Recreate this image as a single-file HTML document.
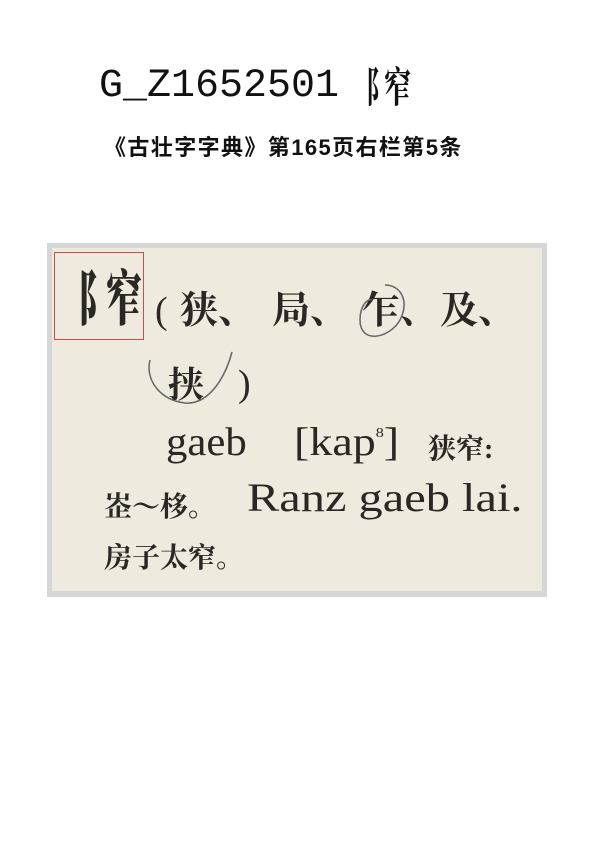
<!DOCTYPE html>
<html><head><meta charset="utf-8"><style>
body{margin:0;width:595px;height:842px;background:#fff;position:relative;overflow:hidden}
.a{position:absolute;white-space:nowrap;line-height:1}
.cj{font-family:"Liberation Serif","Noto Serif CJK SC",serif;color:#2a2724;font-weight:bold}
.sr{font-family:"Liberation Serif",serif;color:#2a2724;transform-origin:left top}
</style></head><body>
<div class="a" style="left:99px;top:64px;font:40px 'Liberation Mono',monospace;color:#111">G_Z1652501</div>
<div class="a" style="left:366px;top:64px;font-size:42px;font-family:'Noto Serif CJK SC',serif;font-weight:bold;color:#111"><span style="display:inline-block;transform:scaleX(.55);transform-origin:left;width:18px">阝</span><span style="display:inline-block;transform:scaleX(.65);transform-origin:left;width:26px">窄</span></div>
<div class="a" style="left:104px;top:130px;font:bold 22px 'Liberation Sans','Noto Sans CJK SC',sans-serif;color:#111;letter-spacing:1.4px">《古壮字字典》第165页右栏第5条</div>

<div class="a" style="left:47px;top:243px;width:500px;height:354px;background:#d6d6d6"></div>
<div class="a" style="left:52px;top:248px;width:490px;height:343px;background:#eeeade"></div>
<div class="a" style="left:54px;top:252px;width:88px;height:86px;border:1px solid #c9504a"></div>
<div class="a cj" style="left:78px;top:270px;font-size:60px;font-weight:900"><span style="display:inline-block;transform:scaleX(.55);transform-origin:left;width:28px">阝</span><span style="display:inline-block;transform:scaleX(.6);transform-origin:left;width:33px">窄</span></div>
<div class="a cj" style="left:155px;top:292px;font-size:38px;font-weight:normal">(</div>
<div class="a cj" style="left:180px;top:292px;font-size:38px">狭、</div>
<div class="a cj" style="left:272px;top:292px;font-size:38px">局、</div>
<div class="a cj" style="left:362px;top:292px;font-size:38px">乍、</div>
<div class="a cj" style="left:440px;top:292px;font-size:38px">及、</div>
<div class="a cj" style="left:168px;top:367px;font-size:36px">挟</div>
<div class="a cj" style="left:238px;top:365px;font-size:38px;font-weight:normal">)</div>
<svg class="a" style="left:0;top:0" width="595" height="842"><g fill="none" stroke="#666" stroke-width="1.5">
<path d="M385 285 C400 285 410 300 400 320 C390 338 360 345 360 320 C360 305 368 298 372 300"/>
<path d="M232 352 C226 375 210 405 185 403 C160 400 145 380 150 360"/>
</g></svg>
<div class="a sr" style="left:166px;top:422px;font-size:40px;transform:scaleX(1.07)">gaeb</div>
<div class="a sr" style="left:294px;top:422px;font-size:40px;transform:scaleX(1.15)">[kap<sup style="font-size:14px;vertical-align:18px">8</sup>]</div>
<div class="a cj" style="left:428px;top:436px;font-size:28px">狭窄:</div>
<div class="a cj" style="left:104px;top:494px;font-size:28px">峜～栘。</div>
<div class="a sr" style="left:247px;top:478px;font-size:40px;transform:scaleX(1.21)">Ranz gaeb lai.</div>
<div class="a cj" style="left:104px;top:545px;font-size:28px">房子太窄。</div>
</body></html>
